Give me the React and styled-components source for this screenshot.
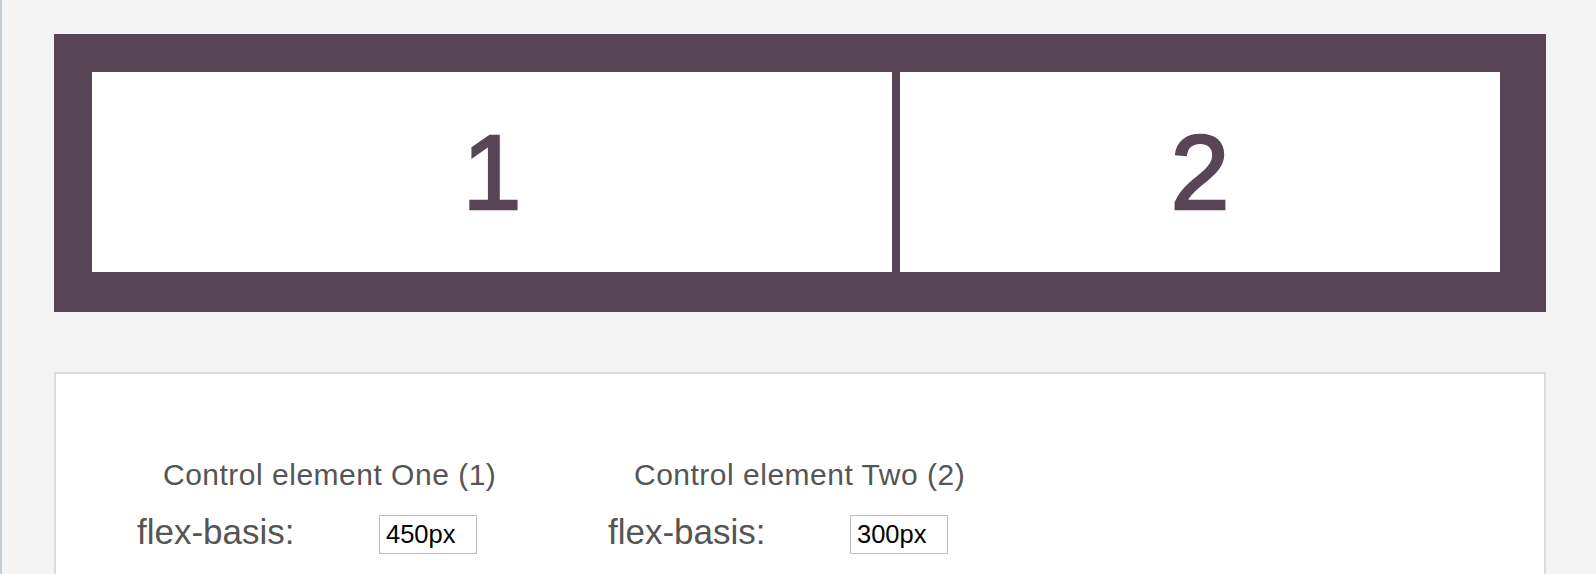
import React from 'react'
import styled, { createGlobalStyle } from 'styled-components'

const GlobalStyle = createGlobalStyle`
body {
    margin: 0;
    background: #f4f4f4;
    font-family: "Liberation Sans", Arial, Helvetica, sans-serif;
}
`

const Page = styled.div`
min-height: 574px;
box-sizing: border-box;
border-left: 2px solid #c6ced8;
padding: 34px 50px 0 52px;
`

const FlexContainer = styled.section`
display: flex;
gap: 8px;
background-color: #584657;
padding: 38px 46px 40px 38px;
`

const Item = styled.div`
flex: 0 0 ${props => props.basis};
height: 200px;
background: #fff;
display: flex;
align-items: center;
justify-content: center;
color: #584657;
font-size: 106px;
font-weight: 400;
-webkit-text-stroke: 2.5px #584657;
`

const Panel = styled.section`
margin-top: 60px;
background: #fff;
border: 2px solid #dcdcdc;
padding: 84px 0 60px 81px;
display: flex;
gap: 131px;
`

const Control = styled.div`
width: 340px;
color: #555;
`

const Heading = styled.h3`
margin: 0 0 20px 26px;
font-size: 30px;
line-height: 34px;
font-weight: 400;
letter-spacing: 0.5px;
white-space: nowrap;
`

const Row = styled.div`
display: flex;
align-items: flex-start;
`

const Label = styled.label`
flex: 0 0 242px;
font-size: 35px;
line-height: 40px;
white-space: nowrap;
`

const Input = styled.input`
margin-top: 3px;
width: 98px;
height: 39px;
box-sizing: border-box;
border: 1px solid #bdbdbd;
padding: 0 0 0 6px;
font-family: "Liberation Sans", Arial, sans-serif;
font-size: 25.5px;
color: #000;
background: #fff;
outline: none;
`

const controls = [
    { name: 'One', n: 1, value: '450px' },
    { name: 'Two', n: 2, value: '300px' },
]

const App = () => {
    return (
        <>
            <GlobalStyle />
            <Page>
                <FlexContainer>
                    <Item basis="800px">1</Item>
                    <Item basis="600px">2</Item>
                </FlexContainer>

                <Panel>
                    {controls.map(c => (
                        <Control key={c.n}>
                            <Heading>Control element {c.name} ({c.n})</Heading>
                            <Row>
                                <Label>flex-basis:</Label>
                                <Input type="text" defaultValue={c.value} />
                            </Row>
                        </Control>
                    ))}
                </Panel>
            </Page>
        </>
    )
}

export default App
